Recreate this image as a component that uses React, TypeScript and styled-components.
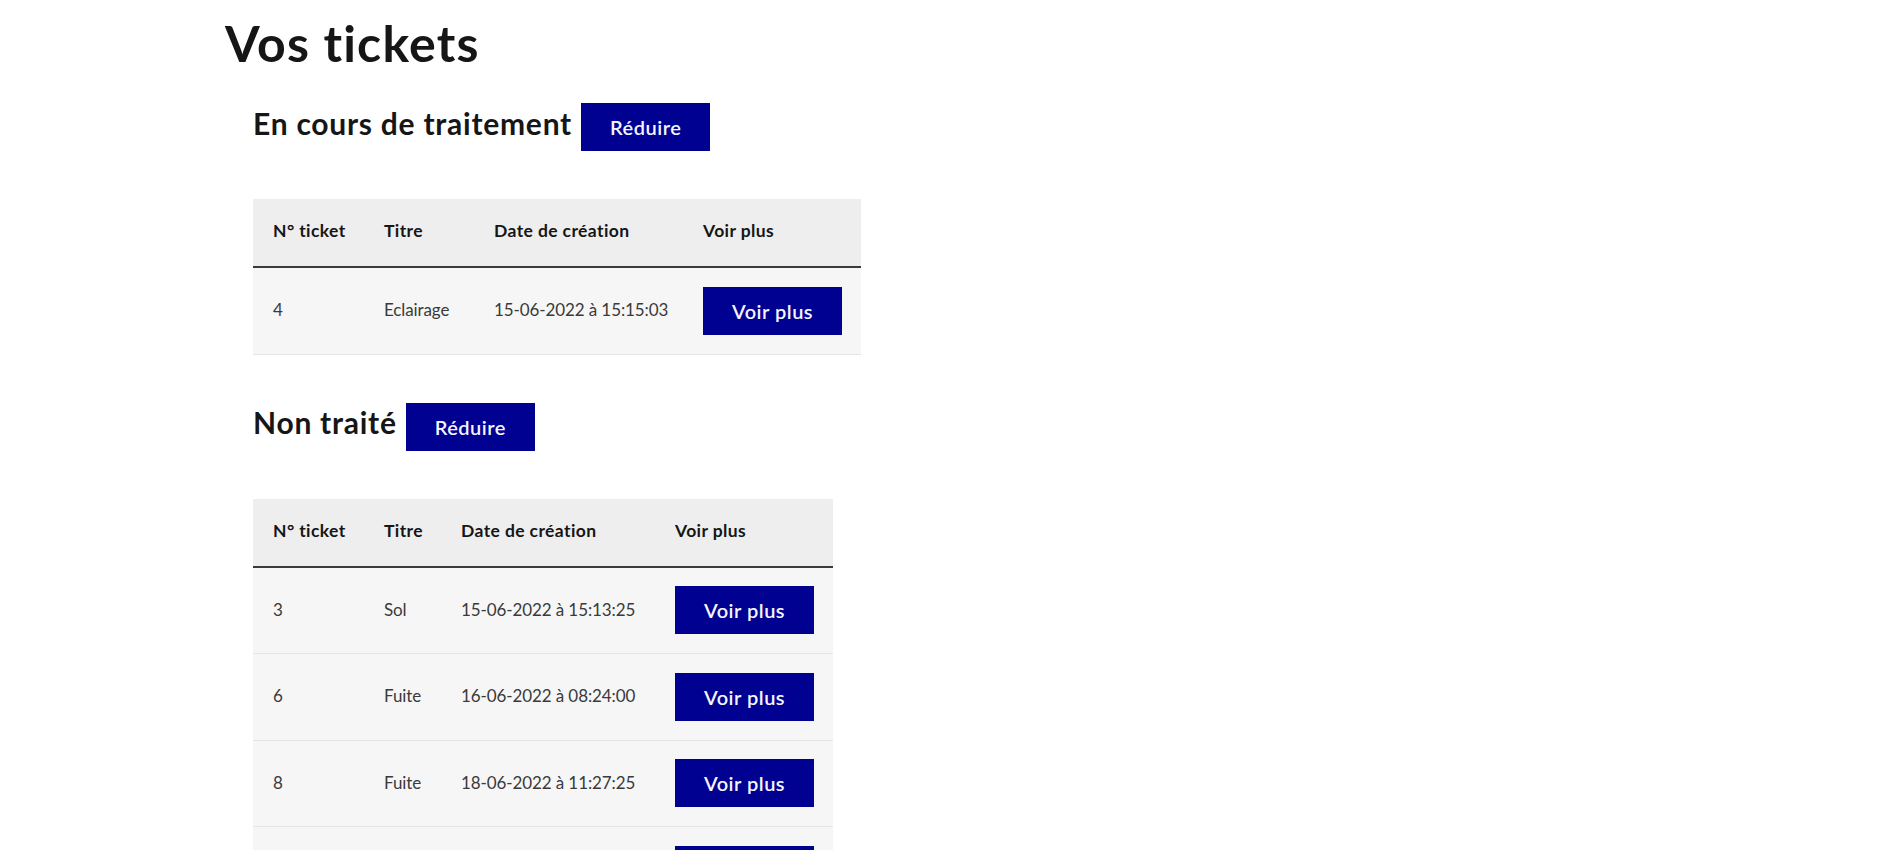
import React from "react";
import styled, { createGlobalStyle } from "styled-components";

const GlobalStyle = createGlobalStyle`
  html, body {
    margin: 0;
    padding: 0;
    background: #ffffff;
  }
  body {
    font-family: "Lato", "Noto Sans", Arial, sans-serif;
    color: #161616;
    -webkit-font-smoothing: antialiased;
  }
`;

const Page = styled.main`
  padding: 13px 0 0 225px;
`;

const Title = styled.h1`
  margin: 0 0 30px 0;
  font-size: 50px;
  line-height: 60px;
  font-weight: 700;
  letter-spacing: 1.2px;
  color: #161616;
`;

const Section = styled.section`
  padding-left: 28px;
  margin-bottom: 48px;
`;

const SectionHeader = styled.div`
  display: flex;
  align-items: center;
  gap: 9px;
  margin-bottom: 48px;
`;

const SectionTitle = styled.h3`
  margin: 0;
  padding-bottom: 9px;
  font-size: 30px;
  line-height: 36px;
  font-weight: 700;
  letter-spacing: 0.75px;
  color: #161616;
`;

const PrimaryButton = styled.button`
  display: inline-flex;
  align-items: center;
  justify-content: center;
  height: 48px;
  padding: 0 29px;
  border: none;
  border-radius: 0;
  background: #000091;
  color: #f5f5fe;
  font-family: "Lato", "Noto Sans", Arial, sans-serif;
  font-weight: 600;
  font-size: 20px;
  letter-spacing: 0.5px;
  cursor: pointer;
  white-space: nowrap;
`;

const Table = styled.table<{ $width: number }>`
  width: ${(p) => p.$width}px;
  border-collapse: collapse;
  table-layout: fixed;
  background: #f6f6f6;
`;

const HeadCell = styled.th`
  height: 63px;
  padding: 0 20px 4px 20px;
  background: #eeeeee;
  border-bottom: 2px solid #3a3a3a;
  text-align: left;
  font-size: 17.5px;
  font-weight: 700;
  letter-spacing: 0.4px;
  color: #161616;
  white-space: nowrap;
`;

const Row = styled.tr`
  border-bottom: 1px solid #e5e5e5;
`;

const Cell = styled.td`
  height: 83.5px;
  padding: 0 20px 2px 20px;
  text-align: left;
  font-size: 17px;
  font-weight: 400;
  letter-spacing: -0.1px;
  color: #3a3a3a;
  white-space: nowrap;
`;

const ActionCell = styled(Cell)`
  padding-bottom: 0;
`;

type Ticket = { id: number; title: string; date: string };

type Group = {
  name: string;
  widths: number[];
  tickets: Ticket[];
};

const groups: Group[] = [
  {
    name: "En cours de traitement",
    widths: [111, 110, 209, 178],
    tickets: [{ id: 4, title: "Eclairage", date: "15-06-2022 à 15:15:03" }],
  },
  {
    name: "Non traité",
    widths: [111, 77, 214, 178],
    tickets: [
      { id: 3, title: "Sol", date: "15-06-2022 à 15:13:25" },
      { id: 6, title: "Fuite", date: "16-06-2022 à 08:24:00" },
      { id: 8, title: "Fuite", date: "18-06-2022 à 11:27:25" },
      { id: 9, title: "Porte", date: "20-06-2022 à 09:41:12" },
    ],
  },
];

const headers = ["N° ticket", "Titre", "Date de création", "Voir plus"];

function TicketGroup({ group }: { group: Group }) {
  const total = group.widths.reduce((a, b) => a + b, 0);
  return (
    <Section>
      <SectionHeader>
        <SectionTitle>{group.name}</SectionTitle>
        <PrimaryButton>Réduire</PrimaryButton>
      </SectionHeader>
      <Table $width={total}>
        <colgroup>
          {group.widths.map((w, i) => (
            <col key={i} style={{ width: w }} />
          ))}
        </colgroup>
        <thead>
          <tr>
            {headers.map((h) => (
              <HeadCell key={h}>{h}</HeadCell>
            ))}
          </tr>
        </thead>
        <tbody>
          {group.tickets.map((t) => (
            <Row key={t.id}>
              <Cell>{t.id}</Cell>
              <Cell>{t.title}</Cell>
              <Cell>{t.date}</Cell>
              <ActionCell>
                <PrimaryButton>Voir plus</PrimaryButton>
              </ActionCell>
            </Row>
          ))}
        </tbody>
      </Table>
    </Section>
  );
}

export default function App() {
  return (
    <>
      <GlobalStyle />
      <Page>
        <Title>Vos tickets</Title>
        {groups.map((g) => (
          <TicketGroup key={g.name} group={g} />
        ))}
      </Page>
    </>
  );
}
